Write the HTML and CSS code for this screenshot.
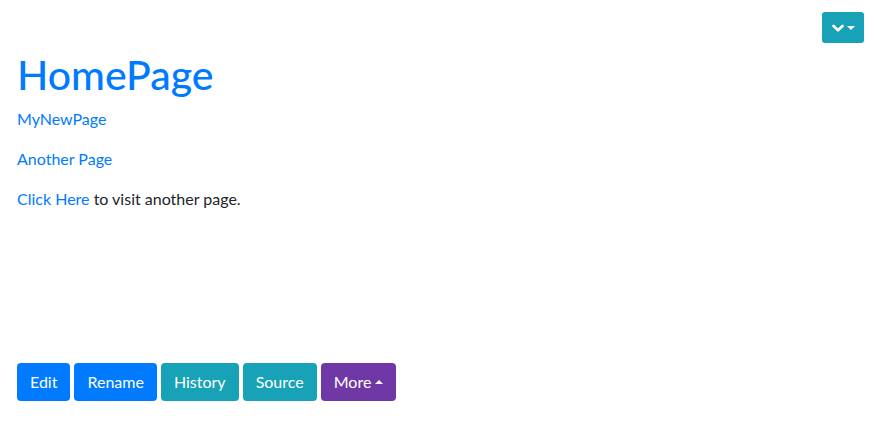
FILE: index.html
```html
<!DOCTYPE html>
<html lang="en">
  <head>
    <meta charset="UTF-8" />
    <title>HomePage</title>
    <link rel="stylesheet" href="styles.css">
  </head>
  <body>
    <header class="topbar">
      <button class="btn btn-sm btn-info menu-toggle" type="button" aria-label="Menu">
        <svg width="12" height="10" viewBox="0 0 12 10" aria-hidden="true">
          <path d="M1.5 3 L6 7.2 L10.5 3" fill="none" stroke="#fff" stroke-width="2.6" stroke-linecap="round" stroke-linejoin="round"/>
        </svg>
        <span class="caret"></span>
      </button>
    </header>
    <main class="page">
      <h1>HomePage</h1>
      <p><a href="#">MyNewPage</a></p>
      <p><a href="#">Another Page</a></p>
      <p><a href="#">Click Here</a> to visit another page.</p>
    </main>
    <footer class="actions">
      <button class="btn btn-primary" type="button">Edit</button>
      <button class="btn btn-primary" type="button">Rename</button>
      <button class="btn btn-info" type="button">History</button>
      <button class="btn btn-info" type="button">Source</button>
      <button class="btn btn-purple" type="button">More <span class="caret up"></span></button>
    </footer>
  </body>
</html>
```

FILE: styles.css
```css
* {
  box-sizing: border-box;
}

body {
  margin: 0;
  padding: 12px 10px 0 17px;
  font-family: "Lato", "Noto Sans", sans-serif;
  font-size: 16px;
  line-height: 1.5;
  color: #212529;
  background: #fff;
}

a {
  color: #007bff;
  text-decoration: none;
}

.topbar {
  display: flex;
  justify-content: flex-end;
}

.page h1 {
  margin: 8px 0 8px;
  font-size: 41px;
  font-weight: 500;
  line-height: 48px;
  color: #007bff;
}

.page p {
  margin: 0 0 16px;
}

.actions {
  display: flex;
  gap: 4px;
  margin-top: 152px;
}

.btn {
  display: inline-flex;
  align-items: center;
  gap: 4px;
  padding: 6px 12px;
  border: 1px solid transparent;
  border-radius: 4px;
  font-family: inherit;
  font-size: 16px;
  line-height: 24px;
  color: #fff;
  cursor: pointer;
}

.btn-sm {
  padding: 4px 8px;
  font-size: 14px;
  line-height: 21px;
  border-radius: 3px;
}

.btn-primary {
  background: #007bff;
}

.btn-info {
  background: #17a2b8;
}

.btn-purple {
  background: #6f38a6;
}

.menu-toggle {
  height: 31px;
  width: 42px;
  justify-content: center;
  gap: 3px;
}

.caret {
  display: inline-block;
  width: 0;
  height: 0;
  border-left: 4px solid transparent;
  border-right: 4px solid transparent;
  border-top: 4px solid #fff;
}

.caret.up {
  border-top: 0;
  border-bottom: 4px solid #fff;
}
```
